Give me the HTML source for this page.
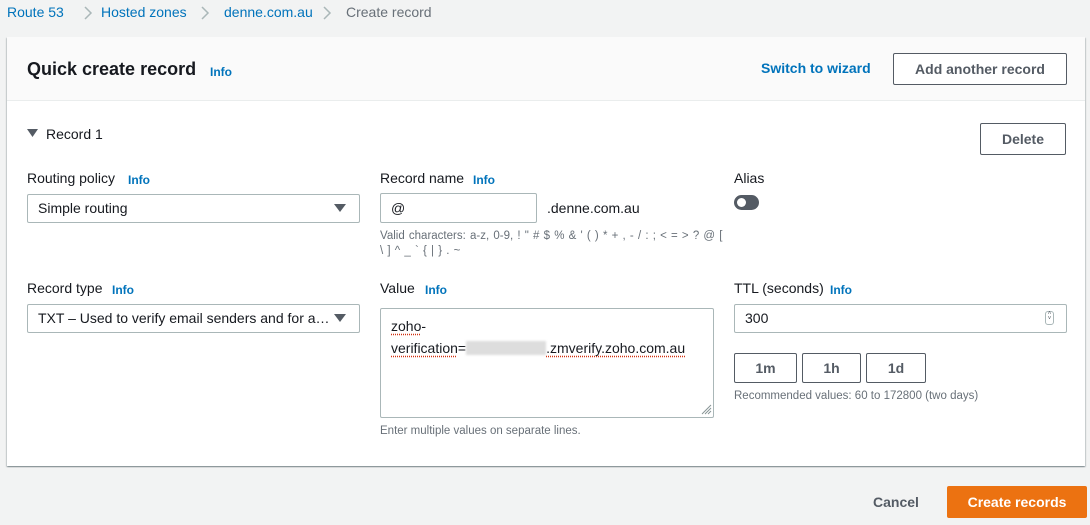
<!DOCTYPE html>
<html><head><style>
*{box-sizing:border-box;margin:0;padding:0}
body{width:1090px;height:525px;background:#f2f3f3;font-family:"Liberation Sans",sans-serif;color:#16191f;position:relative;overflow:hidden;font-size:14px}
.a{position:absolute}
.link{color:#0073bb}
.info{color:#0073bb;font-weight:bold;font-size:12px}
.crumb{top:4px;font-size:14px}
.card{left:7px;top:37px;width:1078px;height:429px;background:#fff;box-shadow:0 1px 1px rgba(0,28,36,.3),1px 1px 1px rgba(0,28,36,.15),-1px 1px 1px rgba(0,28,36,.15)}
.hdr{left:7px;top:37px;width:1078px;height:64px;background:#fafafa;border-bottom:1px solid #eaeded}
.btn{border:1px solid #545b64;border-radius:2px;background:#fff;color:#545b64;font-weight:bold;text-align:center;font-size:14px}
.inp{border:1px solid #aab7b8;border-radius:2px;background:#fff;padding-left:10px;font-size:14px}
.lbl{font-size:14px}
.hint{font-size:11.5px;color:#687078;line-height:15px}
.sq{text-decoration:underline dotted #d13212;text-underline-offset:3px}
</style></head><body>
<div class="a crumb link" style="left:7px">Route 53</div>
<svg class="a" style="left:83px;top:5px" width="10" height="16"><path d="M2 2l6 6-6 6" fill="none" stroke="#aab7b8" stroke-width="1.5"/></svg>
<div class="a crumb link" style="left:101px">Hosted zones</div>
<svg class="a" style="left:200px;top:5px" width="10" height="16"><path d="M2 2l6 6-6 6" fill="none" stroke="#aab7b8" stroke-width="1.5"/></svg>
<div class="a crumb link" style="left:224px">denne.com.au</div>
<svg class="a" style="left:322px;top:5px" width="10" height="16"><path d="M2 2l6 6-6 6" fill="none" stroke="#aab7b8" stroke-width="1.5"/></svg>
<div class="a crumb" style="left:346px;color:#687078">Create record</div>

<div class="a card"></div>
<div class="a hdr"></div>
<div class="a" style="left:27px;top:59px;font-size:18px;font-weight:bold">Quick create record</div>
<div class="a info" style="left:210px;top:65px">Info</div>
<div class="a link" style="left:761px;top:60px;font-weight:bold;font-size:14px">Switch to wizard</div>
<div class="a btn" style="left:893px;top:53px;width:174px;height:32px;line-height:30px">Add another record</div>

<svg class="a" style="left:27px;top:129px" width="12" height="10"><path d="M0 0h11l-5.5 8z" fill="#545b64"/></svg>
<div class="a" style="left:46px;top:126px">Record 1</div>
<div class="a btn" style="left:980px;top:123px;width:86px;height:32px;line-height:30px">Delete</div>

<div class="a lbl" style="left:27px;top:170px">Routing policy</div>
<div class="a info" style="left:128px;top:173px">Info</div>
<div class="a inp" style="left:27px;top:194px;width:333px;height:29px;line-height:27px">Simple routing</div>
<div class="a" style="left:334px;top:204px;width:0;height:0;border-left:6px solid transparent;border-right:6px solid transparent;border-top:8px solid #545b64"></div>

<div class="a lbl" style="left:380px;top:170px">Record name</div>
<div class="a info" style="left:473px;top:173px">Info</div>
<div class="a inp" style="left:380px;top:193px;width:157px;height:30px;line-height:28px">@</div>
<div class="a" style="left:547px;top:200px">.denne.com.au</div>
<div class="a hint" style="left:380px;top:229px;width:345px;word-spacing:1px">Valid characters: a-z, 0-9, ! " # $ % &amp; ' ( ) * + , - / : ; &lt; = &gt; ? @ [<br>\ ] ^ _ ` { | } . ~</div>

<div class="a lbl" style="left:734px;top:170px">Alias</div>
<div class="a" style="left:734px;top:195px;width:25px;height:15px;border-radius:8px;background:#545b64"></div>
<div class="a" style="left:737px;top:198px;width:9px;height:9px;border-radius:5px;background:#fff"></div>

<div class="a lbl" style="left:27px;top:280px">Record type</div>
<div class="a info" style="left:112px;top:283px">Info</div>
<div class="a inp" style="left:27px;top:304px;width:333px;height:29px;line-height:27px">TXT – Used to verify email senders and for a…</div>
<div class="a" style="left:334px;top:314px;width:0;height:0;border-left:6px solid transparent;border-right:6px solid transparent;border-top:8px solid #545b64"></div>

<div class="a lbl" style="left:380px;top:280px">Value</div>
<div class="a info" style="left:425px;top:283px">Info</div>
<div class="a inp" style="left:380px;top:308px;width:334px;height:110px;padding-top:6px;line-height:22px"><span class="sq">zoho</span>-<br><span class="sq">verification</span>=<span style="display:inline-block;width:80px;height:14px;background:#ddd;vertical-align:-2px;filter:blur(1px)"></span><span class="sq">.zmverify.zoho.com.au</span></div>
<svg class="a" style="left:701px;top:404px" width="11" height="11"><path d="M10 1L1 10M10 4L4 10M10 7L7 10" stroke="#879596" stroke-width="1"/></svg>
<div class="a hint" style="left:380px;top:424px">Enter multiple values on separate lines.</div>

<div class="a lbl" style="left:734px;top:280px">TTL (seconds)</div>
<div class="a info" style="left:830px;top:283px">Info</div>
<div class="a inp" style="left:734px;top:304px;width:333px;height:29px;line-height:27px">300</div>
<div class="a" style="left:1045px;top:311px;width:9px;height:14px;border:1px solid #aab7b8;border-radius:3px;font-size:6px;line-height:5px;text-align:center;color:#545b64">˄<br>˅</div>
<div class="a btn" style="left:734px;top:353px;width:63px;height:30px;line-height:28px">1m</div>
<div class="a btn" style="left:802px;top:353px;width:59px;height:30px;line-height:28px">1h</div>
<div class="a btn" style="left:866px;top:353px;width:60px;height:30px;line-height:28px">1d</div>
<div class="a hint" style="left:734px;top:389px">Recommended values: 60 to 172800 (two days)</div>

<div class="a" style="left:873px;top:494px;font-weight:bold;color:#545b64">Cancel</div>
<div class="a" style="left:947px;top:486px;width:140px;height:32px;background:#ec7211;border-radius:2px;color:#fff;font-weight:bold;text-align:center;line-height:32px">Create records</div>
</body></html>
